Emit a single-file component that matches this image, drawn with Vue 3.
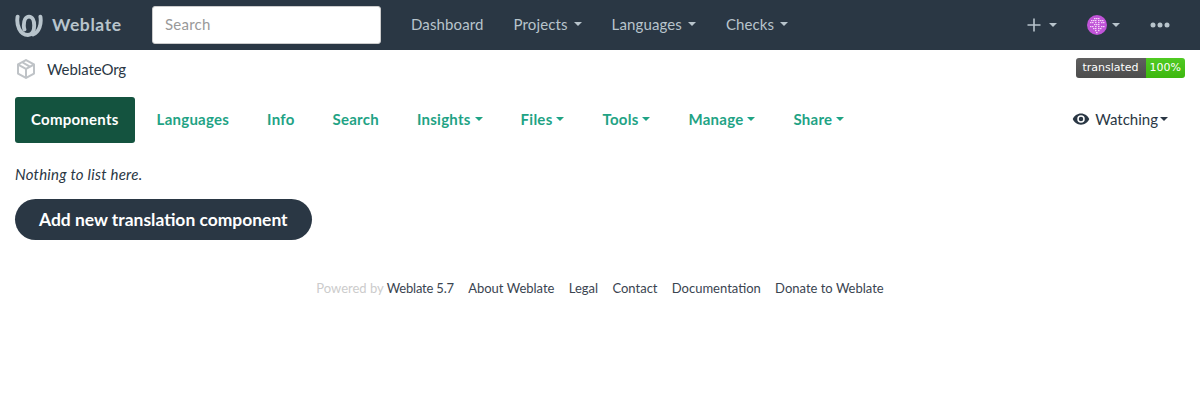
<script setup>
const mainNav = [
  { label: 'Dashboard' },
  { label: 'Projects', caret: true },
  { label: 'Languages', caret: true },
  { label: 'Checks', caret: true },
]
const tabs = [
  { label: 'Components', active: true },
  { label: 'Languages' },
  { label: 'Info' },
  { label: 'Search' },
  { label: 'Insights', caret: true },
  { label: 'Files', caret: true },
  { label: 'Tools', caret: true },
  { label: 'Manage', caret: true },
  { label: 'Share', caret: true },
]
const footer = ['Weblate 5.7', 'About Weblate', 'Legal', 'Contact', 'Documentation', 'Donate to Weblate']
const avatarCells = [
  [7,3],[9,3],[11,3],
  [4,5],[6,5],[8,5],[11,5],[13,5],[15,5],
  [3,7],[5,7],[8,7],[11,7],[14,7],[16,7],
  [7,9],[9,9],[11,9],
  [3,11],[5,11],[8,11],[11,11],[14,11],[16,11],
  [6,13],[8,13],[11,13],[13,13],
  [8,15],[11,15],
  [9,17],
]
</script>

<template>
  <div class="page">
    <header class="navbar">
      <a class="brand">
        <svg class="logo" viewBox="0 0 28 24" width="28" height="24">
          <g fill="none" stroke="#b8c4cc" stroke-linecap="round">
            <path d="M2.6 3.6C1.2 12 4.6 21.8 13 22C17 22 19.2 18.4 19.2 12.6C19.2 7.4 17.4 3.6 14 3.6C10.6 3.6 8.8 7.4 8.8 12.4C8.8 13.8 9 15.2 9.4 16.4" stroke-width="3.9"/>
            <path d="M25.4 3.6C26.6 11 24.4 19 18 21.4" stroke-width="3.9"/>
          </g>
        </svg>
        <span class="brand-text">Weblate</span>
      </a>
      <input class="search" type="text" placeholder="Search" />
      <nav class="main-nav">
        <a v-for="item in mainNav" :key="item.label" class="nav-link">
          {{ item.label }}<span v-if="item.caret" class="caret"></span>
        </a>
      </nav>
      <div class="nav-right">
        <a class="icon-link plus">
          <svg viewBox="0 0 14 14" width="14" height="14"><path d="M7 0.5V13.5M0.5 7H13.5" stroke="#b8c4cc" stroke-width="1.6"/></svg>
          <span class="caret"></span>
        </a>
        <a class="icon-link avatar-link">
          <svg class="avatar" viewBox="0 0 20 20" width="20" height="20">
            <circle cx="10" cy="10" r="10" fill="#c054d8"/>
            <rect v-for="(c, i) in avatarCells" :key="i" :x="c[0]" :y="c[1]" width="1.5" height="1.2" fill="#f3d4f8"/>
          </svg>
          <span class="caret"></span>
        </a>
        <a class="icon-link dots">
          <svg viewBox="0 0 20 6" width="20" height="6">
            <circle cx="3" cy="3" r="2.5" fill="#b8c4cc"/>
            <circle cx="10" cy="3" r="2.5" fill="#b8c4cc"/>
            <circle cx="17" cy="3" r="2.5" fill="#b8c4cc"/>
          </svg>
        </a>
      </div>
    </header>

    <div class="crumb-row">
      <a class="crumb">
        <svg viewBox="0 0 24 24" width="24" height="24">
          <path fill="#bfc3c7" d="M21,16.5C21,16.88 20.79,17.21 20.47,17.38L12.57,21.82C12.41,21.94 12.21,22 12,22C11.79,22 11.59,21.94 11.43,21.82L3.53,17.38C3.21,17.21 3,16.88 3,16.5V7.5C3,7.12 3.21,6.79 3.53,6.62L11.43,2.18C11.59,2.06 11.79,2 12,2C12.21,2 12.41,2.06 12.57,2.18L20.47,6.62C20.79,6.79 21,7.12 21,7.5V16.5M12,4.15L10.11,5.22L16,8.61L17.96,7.5L12,4.15M6.04,7.5L12,10.85L13.96,9.75L8.08,6.35L6.04,7.5M5,15.91L11,19.29V12.58L5,9.21V15.91M19,15.91V9.21L13,12.58V19.29L19,15.91Z"/>
        </svg>
        <span>WeblateOrg</span>
      </a>
      <div class="badge"><span class="badge-l">translated</span><span class="badge-r">100%</span></div>
    </div>

    <div class="tabs-row">
      <nav class="tabs">
        <a v-for="t in tabs" :key="t.label" class="tab" :class="{ active: t.active }">
          {{ t.label }}<span v-if="t.caret" class="caret tab-caret"></span>
        </a>
      </nav>
      <a class="watch">
        <svg viewBox="0 0 24 24" width="18" height="18"><path fill="#2a3744" d="M12,9A3,3 0 0,0 9,12A3,3 0 0,0 12,15A3,3 0 0,0 15,12A3,3 0 0,0 12,9M12,17A5,5 0 0,1 7,12A5,5 0 0,1 12,7A5,5 0 0,1 17,12A5,5 0 0,1 12,17M12,4.5C7,4.5 2.73,7.61 1,12C2.73,16.39 7,19.5 12,19.5C17,19.5 21.27,16.39 23,12C21.27,7.61 17,4.5 12,4.5Z"/></svg>
        <span>Watching</span><span class="caret watch-caret"></span>
      </a>
    </div>

    <p class="empty">Nothing to list here.</p>
    <a class="add-btn">Add new translation component</a>

    <footer class="footer">
      <span class="powered">Powered by</span>
      <a v-for="(f, i) in footer" :key="f" class="foot-link" :class="{ first: i === 0 }">{{ f }}</a>
    </footer>
  </div>
</template>

<style>
html, body { margin: 0; background: #fff; }
</style>

<style scoped>
.page {
  width: 1200px;
  height: 400px;
  overflow: hidden;
  font-family: Lato, "Noto Sans", sans-serif;
  font-size: 14px;
  color: #2a3744;
}
.navbar {
  height: 50px;
  background: #2a3744;
  display: flex;
  align-items: center;
  padding: 0 15px;
  box-sizing: border-box;
}
.brand { display: flex; align-items: center; gap: 9px; width: 137px; flex: none; }
.logo { flex: none; }
.brand-text { color: #b8c4cc; font-size: 17.5px; font-weight: 700; letter-spacing: 0.6px; padding-bottom: 1px; }
.search {
  width: 229px;
  height: 38px;
  box-sizing: border-box;
  border: 1px solid #ccc;
  border-radius: 3px;
  padding: 0 12px 2px;
  font: 15px Lato, sans-serif;
  letter-spacing: 0.25px;
  background: #fff;
  flex: none;
}
.search::placeholder { color: #999; }
.main-nav { display: flex; margin-left: 15px; }
.nav-link { color: #b8c4cc; font-size: 15px; letter-spacing: 0.12px; padding: 0 15px 2px; white-space: nowrap; display: flex; align-items: center; }
.caret {
  display: inline-block;
  width: 0;
  height: 0;
  margin-left: 6px;
  border-top: 4px solid currentColor;
  border-left: 4px solid transparent;
  border-right: 4px solid transparent;
}
.nav-right { margin-left: auto; display: flex; align-items: center; gap: 29px; padding-right: 15px; color: #b8c4cc; }
.icon-link { display: flex; align-items: center; }
.plus .caret { margin-left: 8px; }
.avatar-link { margin: 0 1px; }
.avatar-link .caret { margin-left: 5px; }
.crumb-row {
  height: 37px;
  display: flex;
  align-items: flex-start;
  justify-content: space-between;
  padding: 0 15px;
}
.crumb { display: flex; align-items: center; gap: 9px; font-size: 15px; letter-spacing: -0.1px; height: 38px; margin-left: -1px; }
.badge { display: flex; margin-top: 8px; height: 20px; border-radius: 3px; overflow: hidden; font: 11px "DejaVu Sans", sans-serif; color: #fff; line-height: 20px; }
.badge-l { background: linear-gradient(rgba(187,187,187,.1), rgba(0,0,0,.1)), #555; padding: 0 7px 0 6px; }
.badge-r { background: linear-gradient(rgba(187,187,187,.1), rgba(0,0,0,.1)), #4c1; padding: 0 4px; }
.tabs-row {
  margin-top: 10px;
  display: flex;
  align-items: center;
  justify-content: space-between;
  padding: 0 15px;
}
.tabs { display: flex; gap: 6px; }
.tab {
  height: 46px;
  box-sizing: border-box;
  padding: 0 16px 2px;
  display: flex;
  align-items: center;
  color: #1fa385;
  font-size: 15px;
  font-weight: 700;
  letter-spacing: 0.25px;
  border-radius: 3px;
  white-space: nowrap;
}
.tab.active { background: #14533f; color: #fff; }
.tab-caret { margin-left: 4px; }
.watch { display: flex; align-items: center; font-size: 15px; padding-right: 17px; padding-bottom: 2px; }
.watch svg { margin-right: 5px; }
.watch-caret { margin-left: 2px; }
.empty { margin: 21px 15px 0; font-style: italic; font-size: 15px; letter-spacing: 0.25px; line-height: 20px; color: #2a3744; }
.add-btn {
  display: inline-block;
  margin: 15px 0 0 15px;
  height: 41px;
  line-height: 41px;
  padding: 0 24px;
  border-radius: 21px;
  background: #2a3744;
  color: #fff;
  font-size: 17.45px;
  font-weight: 700;
}
.footer {
  margin-top: 39px;
  display: flex;
  justify-content: center;
  font-size: 13px;
  line-height: 18px;
}
.powered { color: #ccc; }
.foot-link { margin-left: 14.3px; color: #3a4450; }
.foot-link.first { margin-left: 3px; letter-spacing: -0.2px; }
</style>
